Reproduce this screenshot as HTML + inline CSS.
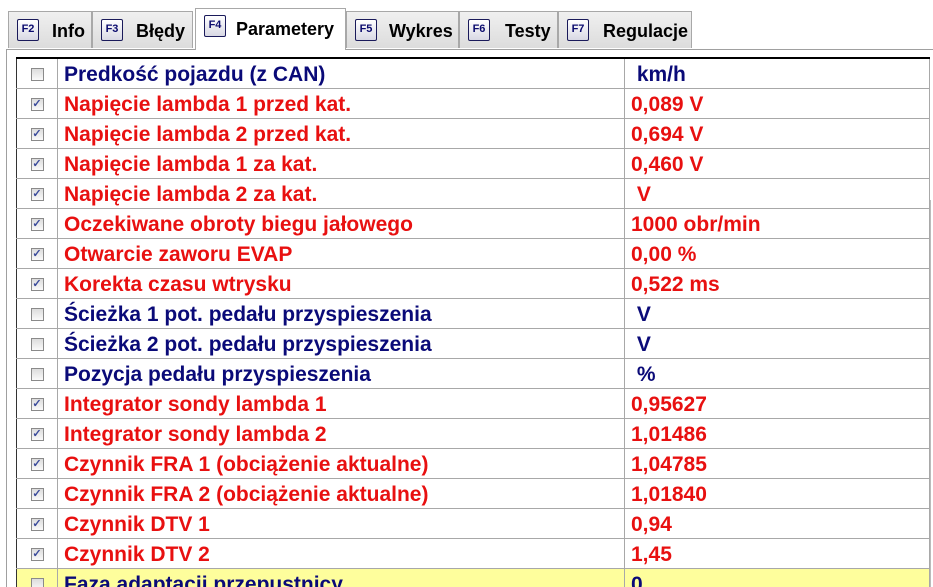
<!DOCTYPE html>
<html><head><meta charset="utf-8"><style>
html,body{margin:0;width:933px;height:587px;overflow:hidden;background:#fff;font-family:"Liberation Sans",Arial,sans-serif}
#w{position:relative;width:933px;height:587px;overflow:hidden}
.tab{position:absolute;top:11px;height:37px;background:linear-gradient(#f0f0f0,#dcdcdc);border:1px solid #a8a8a8;border-bottom:none;box-sizing:border-box;font-weight:bold;font-size:18px;color:#000}
.tab.sel{top:8px;height:42px;background:#fff;z-index:3}
.key{position:absolute;left:8px;top:7px;width:22px;height:22px;border:1px solid #1a1a5a;border-radius:2px;background:linear-gradient(#fff,#d8d8e4);box-sizing:border-box;font-size:11px;color:#0b0b6e;font-weight:bold;text-align:center;line-height:19px;font-family:"Liberation Sans",sans-serif}
.tab.sel .key{top:6px}
.lbl{position:absolute;top:9px}
.tab.sel .lbl{top:10px}
.panel{position:absolute;left:6px;top:49px;width:940px;height:600px;border-top:1px solid #a0a0a0;border-left:1px solid #a0a0a0}
table{position:absolute;left:16px;top:57px;border-collapse:collapse;border-top:2px solid #000;border-left:1px solid #333}
td{border-bottom:1px solid #a8a8a8;border-right:1px solid #a8a8a8;padding:3px 0 0 0;box-sizing:border-box;font-weight:bold;font-size:21px;white-space:nowrap;line-height:26px;height:30px}
td.c{width:41px;text-align:center;padding-top:0}
td.n{width:567px;padding-left:6px}
td.v{width:305px;padding-left:6px}
.b{color:#0a0a78}.r{color:#e81010}
.cb{display:inline-block;width:11px;height:11px;border:1px solid #8a8a8a;background:linear-gradient(#dcdcdc,#fafafa);vertical-align:middle;position:relative;top:1px;font-size:11px;line-height:11px;color:#3a4a9a;font-weight:bold}
tr.y td{background:#fefe9c}
.sb{position:absolute;left:930px;top:200px;width:3px;height:400px;border-left:1px solid #bbb}
</style></head><body><div id="w">
<div class="tab" style="left:8px;width:84px"><div class="key">F2</div><span class="lbl" style="left:43px">Info</span></div>
<div class="tab" style="left:92px;width:101px"><div class="key">F3</div><span class="lbl" style="left:43px">Błędy</span></div>
<div class="tab sel" style="left:195px;width:151px"><div class="key">F4</div><span class="lbl" style="left:40px">Parametery</span></div>
<div class="tab" style="left:346px;width:113px"><div class="key">F5</div><span class="lbl" style="left:42px">Wykres</span></div>
<div class="tab" style="left:459px;width:99px"><div class="key">F6</div><span class="lbl" style="left:45px">Testy</span></div>
<div class="tab" style="left:558px;width:134px"><div class="key">F7</div><span class="lbl" style="left:44px">Regulacje</span></div>
<div class="panel"></div>
<div class="sb"></div>
<table>
<tr><td class="c"><span class="cb"></span></td><td class="n b">Predkość pojazdu (z CAN)</td><td class="v b">&nbsp;km/h</td></tr>
<tr><td class="c"><span class="cb">✓</span></td><td class="n r">Napięcie lambda 1 przed kat.</td><td class="v r">0,089 V</td></tr>
<tr><td class="c"><span class="cb">✓</span></td><td class="n r">Napięcie lambda 2 przed kat.</td><td class="v r">0,694 V</td></tr>
<tr><td class="c"><span class="cb">✓</span></td><td class="n r">Napięcie lambda 1 za kat.</td><td class="v r">0,460 V</td></tr>
<tr><td class="c"><span class="cb">✓</span></td><td class="n r">Napięcie lambda 2 za kat.</td><td class="v r">&nbsp;V</td></tr>
<tr><td class="c"><span class="cb">✓</span></td><td class="n r">Oczekiwane obroty biegu jałowego</td><td class="v r">1000 obr/min</td></tr>
<tr><td class="c"><span class="cb">✓</span></td><td class="n r">Otwarcie zaworu EVAP</td><td class="v r">0,00 %</td></tr>
<tr><td class="c"><span class="cb">✓</span></td><td class="n r">Korekta czasu wtrysku</td><td class="v r">0,522 ms</td></tr>
<tr><td class="c"><span class="cb"></span></td><td class="n b">Ścieżka 1 pot. pedału przyspieszenia</td><td class="v b">&nbsp;V</td></tr>
<tr><td class="c"><span class="cb"></span></td><td class="n b">Ścieżka 2 pot. pedału przyspieszenia</td><td class="v b">&nbsp;V</td></tr>
<tr><td class="c"><span class="cb"></span></td><td class="n b">Pozycja pedału przyspieszenia</td><td class="v b">&nbsp;%</td></tr>
<tr><td class="c"><span class="cb">✓</span></td><td class="n r">Integrator sondy lambda 1</td><td class="v r">0,95627</td></tr>
<tr><td class="c"><span class="cb">✓</span></td><td class="n r">Integrator sondy lambda 2</td><td class="v r">1,01486</td></tr>
<tr><td class="c"><span class="cb">✓</span></td><td class="n r">Czynnik FRA 1 (obciążenie aktualne)</td><td class="v r">1,04785</td></tr>
<tr><td class="c"><span class="cb">✓</span></td><td class="n r">Czynnik FRA 2 (obciążenie aktualne)</td><td class="v r">1,01840</td></tr>
<tr><td class="c"><span class="cb">✓</span></td><td class="n r">Czynnik DTV 1</td><td class="v r">0,94</td></tr>
<tr><td class="c"><span class="cb">✓</span></td><td class="n r">Czynnik DTV 2</td><td class="v r">1,45</td></tr>
<tr class="y"><td class="c"><span class="cb"></span></td><td class="n b">Faza adaptacji przepustnicy</td><td class="v b">0</td></tr>
</table>
</div></body></html>
